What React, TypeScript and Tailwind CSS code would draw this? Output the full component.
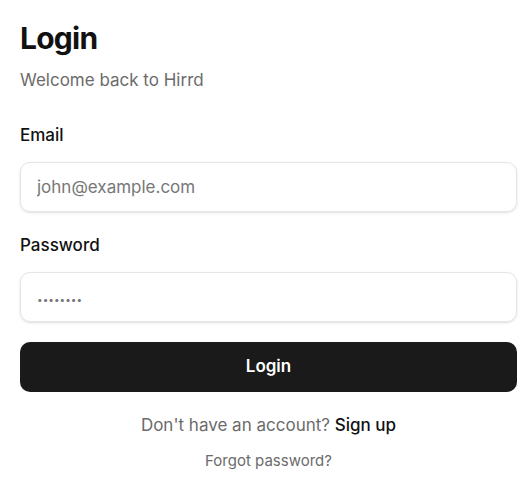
export default function App() {
  return (
    <div
      className="min-h-screen bg-white pl-5 pr-[11px] pt-[22px] text-[#111]"
      style={{ fontFamily: 'Inter, "Liberation Sans", sans-serif' }}
    >
      <h1 className="text-[30px] font-bold leading-[32px] tracking-tight">Login</h1>
      <p className="mt-[14px] text-[17px] leading-[24px] text-[#6b6b6b]">Welcome back to Hirrd</p>

      <form className="mt-[31px] flex flex-col" onSubmit={(e) => e.preventDefault()}>
        <label className="text-[17px] font-medium leading-[24px]">Email</label>
        <input
          type="email"
          placeholder="john@example.com"
          className="mt-[15px] h-[50px] w-full rounded-[10px] border border-[#e5e5e5] px-4 text-[17px] shadow-sm outline-none placeholder:text-[#777]"
        />

        <label className="mt-[21px] text-[17px] font-medium leading-[24px]">Password</label>
        <input
          type="password"
          placeholder="••••••••"
          className="mt-[15px] h-[50px] w-full rounded-[10px] border border-[#e5e5e5] px-4 text-[17px] shadow-sm outline-none placeholder:text-[10px] placeholder:text-[#777]"
        />

        <button
          type="submit"
          className="mt-[20px] h-[50px] w-full rounded-[10px] bg-[#1a1a1a] text-[17px] font-semibold text-white"
        >
          Login
        </button>
      </form>

      <p className="mt-[21px] text-center text-[17px] leading-[24px] text-[#6b6b6b]">
        Don't have an account? <span className="font-medium text-[#111]">Sign up</span>
      </p>
      <p className="mt-[14px] text-center text-[15px] leading-[20px] text-[#6b6b6b]">Forgot password?</p>
    </div>
  );
}
